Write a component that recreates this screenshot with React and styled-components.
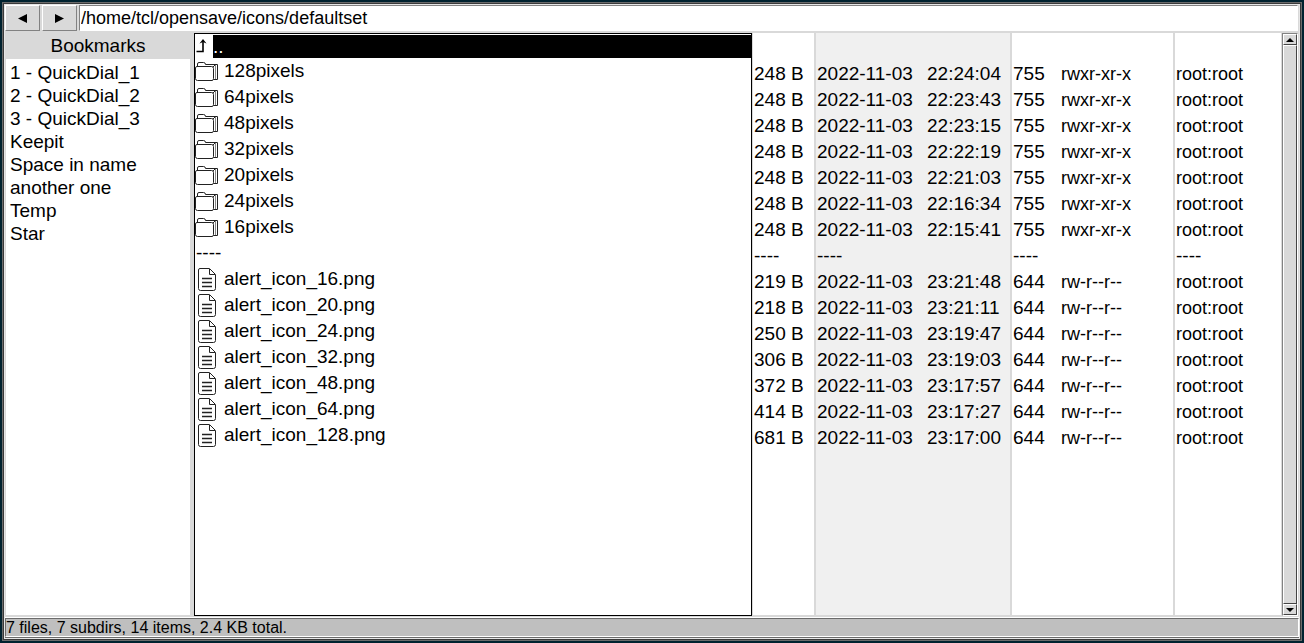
import React from 'react';
import styled, { createGlobalStyle, css } from 'styled-components';

const Global = createGlobalStyle`
  * { box-sizing: border-box; }
  html, body { margin: 0; height: 100%; }
  #root { height: 100%; }
  body, button, input {
    font-family: "Liberation Sans", Arial, sans-serif;
    font-size: 19px;
    color: #000;
  }
`;

const Desktop = styled.div`
  height: 100vh;
  padding: 2px;
  background: #00222f;
  overflow: hidden;
`;

const Frame = styled.div`
  height: 100%;
  border: 1px solid #6b6b6b;
  padding: 1px;
  background: #3a3a3a;
`;

const Window = styled.main`
  height: 100%;
  display: flex;
  flex-direction: column;
  background: #d9d9d9;
  border: 1px solid #e6e6e6;
`;

const Toolbar = styled.header`
  display: flex;
  height: 26px;
  flex: none;
  padding-right: 1px;
`;

const NavButton = styled.button`
  width: 35px;
  margin: 0 2px 0 0;
  padding: 0;
  display: grid;
  place-items: center;
  background: #d9d9d9;
  border: 1px solid;
  border-color: #fff #828282 #828282 #fff;
`;

const PathInput = styled.input`
  flex: 1;
  min-width: 0;
  padding: 0 1px;
  border: 1px solid;
  border-color: #828282 #fff #fff #828282;
  border-radius: 0;
  background: #fff;
  font-size: 18px;
  outline: none;
`;

const Body = styled.div`
  flex: 1;
  min-height: 0;
  display: flex;
  padding: 2px 1px 1px;
  border-bottom: 1px solid #fff;
`;

const Sidebar = styled.nav`
  width: 184px;
  margin: 0 4px 1px 0;
  display: flex;
  flex-direction: column;
`;

const SidebarTitle = styled.h2`
  margin: 0;
  font-size: 19px;
  font-weight: 400;
  line-height: 26px;
  text-align: center;
`;

const BookmarkList = styled.ul`
  flex: 1;
  margin: 0;
  padding: 2px 4px;
  list-style: none;
  background: #fff;
`;

const Bookmark = styled.li`
  height: 23px;
  line-height: 23px;
`;

const BookmarkLink = styled.a`
  color: inherit;
  text-decoration: none;
`;

const NameColumn = styled.div`
  width: 558px;
  flex: 0 1 auto;
  border: 1px solid #000;
  background: #fff;
  padding-top: 1px;
`;

const Parent = styled.div`
  display: flex;
  height: 23px;
  line-height: 23px;
`;

const ParentLabel = styled.span`
  flex: 1;
  background: #000;
  color: #fff;
`;

const Row = styled.div`
  height: 26px;
  padding-left: 1px;
  line-height: 26px;
  white-space: pre;
  ${(p) => p.$icon && css`
    display: flex;
    gap: 5px;
    padding-left: 0;
  `}
`;

const Column = styled.div`
  width: ${(p) => p.$width};
  flex: ${(p) => (p.$grow ? '1 1 0' : 'none')};
  margin: 0 0 1px ${(p) => p.$gap};
  padding: 28px 0 0;
  overflow: hidden;
  background: ${(p) => (p.$shade ? '#f0f0f0' : '#fff')};
`;

const Field = styled.span`
  display: inline-block;
  width: ${(p) => p.$width};
`;

const Access = styled.span`
  font-size: 18px;
`;

const Scrollbar = styled.div`
  width: 16px;
  margin-left: 1px;
  display: flex;
  flex-direction: column;
  background: #c3c3c3;
  border: 1px solid;
  border-color: #828282 #fff #fff #828282;
`;

const ScrollButton = styled.button`
  height: 11px;
  margin: 0;
  padding: 0;
  display: grid;
  place-items: center;
  background: #d9d9d9;
  border: 1px solid;
  border-color: #fff #444 #444 #fff;
`;

const Thumb = styled.div`
  flex: 1;
  background: #d9d9d9;
  border: 1px solid;
  border-color: #fff #444 #444 #fff;
`;

const Status = styled.footer`
  height: 19px;
  flex: none;
  margin-bottom: 1px;
  border: 1px solid;
  border-color: #6b6b6b #fff #fff #6b6b6b;
  box-shadow: 0 1px 0 #6b6b6b;
  background: #bfbfbf;
  font-size: 16px;
  line-height: 18px;
`;

const Triangle = ({ points, w, h }) => (
  <svg width={w} height={h} viewBox={`0 0 ${w} ${h}`} aria-hidden="true">
    <polygon points={points} />
  </svg>
);

const FolderIcon = () => (
  <svg width="24" height="26" viewBox="0 0 24 26" fill="none" stroke="#222" aria-hidden="true">
    <path d="M.5 10Q.5 8.500 2 8.500H16.500Q18.500 8.500 18.500 10.500V20.500Q18.500 22.500 17 22.500H2.500Q.5 22.500 .5 20.500Z" />
    <path d="M2.500 8V6Q2.500 4.500 4 4.500H8.500Q10.500 4.500 10.500 6.500H22.500V21.500H18.500M18 9L20.500 6.500" />
    <path d="M20.500 7V21" stroke="#888" />
  </svg>
);

const FileIcon = () => (
  <svg width="24" height="26" viewBox="0 0 24 26" fill="none" stroke="#222" aria-hidden="true">
    <path d="M5 2.500H14.500L20.500 8.500V22.500Q20.500 24.500 18.500 24.500H5.500Q3.500 24.500 3.500 22.500V4Q3.500 2.500 5 2.500M14.500 3V8.500H20" />
    <path d="M7 12.500H17M7 16.500H17M7 20.500H17" strokeWidth="1.300" />
  </svg>
);

const UpIcon = () => (
  <svg width="18" height="23" viewBox="0 0 18 23" fill="none" stroke="#000" aria-hidden="true">
    <path d="M1.500 16.500H8V6" strokeWidth="1.600" />
    <path d="M4.500 8.500L8 4L11.500 8.500L8 7Z" fill="#000" stroke="none" />
  </svg>
);

const bookmarks = ['1 - QuickDial_1', '2 - QuickDial_2', '3 - QuickDial_3', 'Keepit', 'Space in name', 'another one', 'Temp', 'Star'];

const folder = (name, time) => ({ kind: 'folder', name, size: '248 B', time, mode: '755', perms: 'rwxr-xr-x' });
const file = (name, size, time) => ({ kind: 'file', name, size, time, mode: '644', perms: 'rw-r--r--' });

const entries = [
  folder('128pixels', '22:24:04'),
  folder('64pixels', '22:23:43'),
  folder('48pixels', '22:23:15'),
  folder('32pixels', '22:22:19'),
  folder('20pixels', '22:21:03'),
  folder('24pixels', '22:16:34'),
  folder('16pixels', '22:15:41'),
  { kind: 'rule' },
  file('alert_icon_16.png', '219 B', '23:21:48'),
  file('alert_icon_20.png', '218 B', '23:21:11'),
  file('alert_icon_24.png', '250 B', '23:19:47'),
  file('alert_icon_32.png', '306 B', '23:19:03'),
  file('alert_icon_48.png', '372 B', '23:17:57'),
  file('alert_icon_64.png', '414 B', '23:17:27'),
  file('alert_icon_128.png', '681 B', '23:17:00'),
];

const renderRows = (cell) => entries.map((e, i) => (
  <Row key={i}>{e.kind === 'rule' ? '----' : cell(e)}</Row>
));

export default function App() {
  return (
    <Desktop>
      <Global />
      <Frame>
        <Window>
          <Toolbar>
            <NavButton aria-label="Back"><Triangle w={9} h={9} points="0,4.5 9,0 9,9" /></NavButton>
            <NavButton aria-label="Forward"><Triangle w={9} h={9} points="0,0 9,4.5 0,9" /></NavButton>
            <PathInput aria-label="Path" defaultValue="/home/tcl/opensave/icons/defaultset" />
          </Toolbar>
          <Body>
            <Sidebar>
              <SidebarTitle>Bookmarks</SidebarTitle>
              <BookmarkList>
                {bookmarks.map((b) => (
                  <Bookmark key={b}><BookmarkLink href="#">{b}</BookmarkLink></Bookmark>
                ))}
              </BookmarkList>
            </Sidebar>
            <NameColumn>
              <Parent><UpIcon /><ParentLabel>..</ParentLabel></Parent>
              {entries.map((e, i) => (
                e.kind === 'rule'
                  ? <Row key={i}>----</Row>
                  : <Row key={i} $icon>{e.kind === 'folder' ? <FolderIcon /> : <FileIcon />}{e.name}</Row>
              ))}
            </NameColumn>
            <Column $width="61px" $gap="1px">{renderRows((e) => e.size)}</Column>
            <Column $width="194px" $gap="2px" $shade>
              {renderRows((e) => <><Field $width="110px">2022-11-03</Field>{e.time}</>)}
            </Column>
            <Column $width="161px" $gap="2px">
              {renderRows((e) => <><Field $width="48px">{e.mode}</Field><Access>{e.perms}</Access></>)}
            </Column>
            <Column $grow $gap="2px">{renderRows(() => <Access>root:root</Access>)}</Column>
            <Scrollbar>
              <ScrollButton aria-label="Scroll up"><Triangle w={8} h={4} points="0,4 4,0 8,4" /></ScrollButton>
              <Thumb />
              <ScrollButton aria-label="Scroll down"><Triangle w={8} h={4} points="0,0 8,0 4,4" /></ScrollButton>
            </Scrollbar>
          </Body>
          <Status>7 files, 7 subdirs, 14 items, 2.4 KB total.</Status>
        </Window>
      </Frame>
    </Desktop>
  );
}
